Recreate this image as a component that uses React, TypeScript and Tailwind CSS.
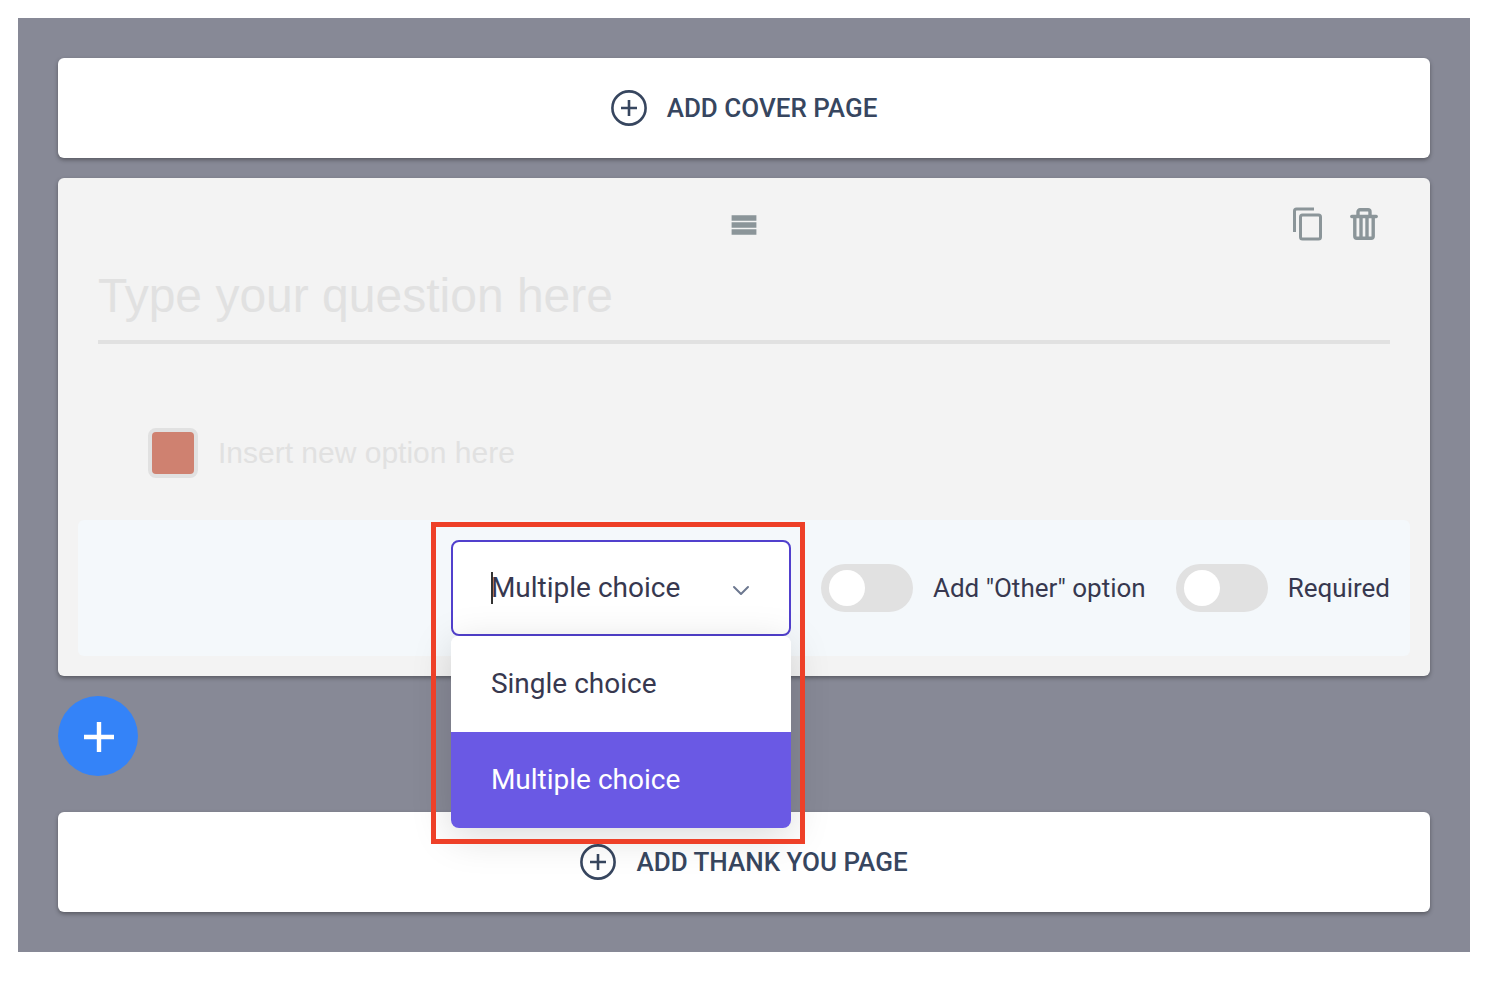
import React, { useState } from "react";

interface IconProps {
  className?: string;
}

const CHOICES = ["Single choice", "Multiple choice"];

function PlusCircleIcon({ className }: IconProps) {
  return (
    <svg className={className} viewBox="0 0 36 36" fill="none" stroke="currentColor" strokeWidth="2.6" aria-hidden="true">
      <circle cx="18" cy="18" r="16.6" />
      <path d="M18 10v16M10 18h16" />
    </svg>
  );
}

function CopyIcon({ className }: IconProps) {
  return (
    <svg className={className} viewBox="0 0 36 36" fill="none" stroke="currentColor" strokeWidth="3" aria-hidden="true">
      <path d="M4.5 26V5a2 2 0 0 1 2-2H24" />
      <rect x="10.5" y="9" width="20" height="24" rx="2" />
    </svg>
  );
}

function TrashIcon({ className }: IconProps) {
  return (
    <svg className={className} viewBox="0 0 36 36" fill="none" stroke="currentColor" strokeWidth="3.4" aria-hidden="true">
      <path d="M12 10V5.8a2 2 0 0 1 2-2h8a2 2 0 0 1 2 2V10" />
      <path d="M5.800 10.500h24.400" strokeLinecap="round" />
      <path d="M8.800 11v19.300a2 2 0 0 0 2 2h14.400a2 2 0 0 0 2-2V11" />
      <path d="M15 11v21M21 11v21" />
    </svg>
  );
}

function AddPageButton({ label }: { label: string }) {
  return (
    <button
      type="button"
      className="flex w-full items-center justify-center gap-5 h-[100px] rounded-md bg-white text-[26px] leading-8 font-medium text-[#37465f] shadow-[0_2px_4px_rgba(0,0,0,0.35)]"
    >
      <PlusCircleIcon className="w-9 h-9" />
      {label}
    </button>
  );
}

interface ToggleProps {
  label: string;
  checked: boolean;
  onChange: (checked: boolean) => void;
}

function Toggle({ label, checked, onChange }: ToggleProps) {
  return (
    <label className="flex items-center gap-5 text-[26px] leading-8 text-[#37384f] whitespace-nowrap">
      <input
        type="checkbox"
        checked={checked}
        onChange={(e) => onChange(e.target.checked)}
        className="flex items-center appearance-none w-[92px] h-12 px-2 rounded-full bg-[#e1e1e1] checked:bg-[#6a59e4] before:block before:w-9 before:h-9 before:rounded-full before:bg-white checked:before:ml-auto"
      />
      {label}
    </label>
  );
}

function ChoiceSelect() {
  const [choice, setChoice] = useState("Multiple choice");
  const [open, setOpen] = useState(true);

  const pick = (value: string) => {
    setChoice(value);
    setOpen(false);
  };

  return (
    <div className="relative z-10 w-[340px] text-[28px] text-[#37384f]">
      <select
        aria-label="Question type"
        value={choice}
        onChange={(e) => pick(e.target.value)}
        className="block w-full h-24 pl-[38px] pr-20 appearance-none rounded-lg border-2 border-[#5140cd] bg-white outline-none"
      >
        {CHOICES.map((c) => (
          <option key={c}>{c}</option>
        ))}
      </select>
      <span className="absolute left-10 top-8 w-0.5 h-8 bg-[#333333]" />
      <svg
        className="absolute right-10 top-10 w-5 h-5 text-[#6d7890] pointer-events-none"
        viewBox="0 0 20 20"
        fill="none"
        stroke="currentColor"
        strokeWidth="2"
        strokeLinecap="round"
        strokeLinejoin="round"
        aria-hidden="true"
      >
        <path d="M3 7l7 7 7-7" />
      </svg>

      {open && (
        <ul
          role="listbox"
          aria-label="Question types"
          className="absolute left-0 top-full w-full overflow-hidden rounded-lg bg-white shadow-[0_8px_40px_rgba(0,0,0,0.15)]"
        >
          {CHOICES.map((c) => (
            <li key={c} role="option" aria-selected={c === choice}>
              <button
                type="button"
                onClick={() => pick(c)}
                className={`block w-full h-24 px-10 text-left ${c === choice ? "bg-[#6a59e4] text-white" : "bg-white"}`}
              >
                {c}
              </button>
            </li>
          ))}
        </ul>
      )}

      {/* highlight around the drop-down */}
      <div className="absolute -left-5 -top-[18px] w-[374px] h-[322px] border-5 border-[#ee4028] pointer-events-none" />
    </div>
  );
}

function QuestionCard() {
  const [question, setQuestion] = useState("");
  const [option, setOption] = useState("");
  const [other, setOther] = useState(false);
  const [required, setRequired] = useState(false);

  return (
    <section className="rounded-md bg-[#f3f3f3] pt-7 px-5 pb-5 shadow-[0_2px_4px_rgba(0,0,0,0.35)]">
      <div className="grid grid-cols-3 items-center px-7 text-[#8b9599]">
        <button type="button" aria-label="Move question" className="col-start-2 justify-self-center">
          <svg className="w-[26px] h-[22px]" viewBox="0 0 26 22" fill="currentColor" aria-hidden="true">
            <path d="M.6 2.300h24.800v5.400H.6zM.6 9.300h24.800v5.400H.6zM.6 16.300h24.800v5.400H.6z" />
          </svg>
        </button>
        <div className="flex justify-end gap-5">
          <button type="button" aria-label="Duplicate question">
            <CopyIcon className="w-9 h-9" />
          </button>
          <button type="button" aria-label="Delete question">
            <TrashIcon className="w-9 h-9" />
          </button>
        </div>
      </div>

      <div className="mt-6 px-5">
        <input
          type="text"
          aria-label="Question"
          placeholder="Type your question here"
          value={question}
          onChange={(e) => setQuestion(e.target.value)}
          className="block w-full h-[78px] pb-4 border-b-4 border-[#e1e1e1] font-['Liberation_Sans',sans-serif] text-[48px] leading-14 text-[#37384f] placeholder:text-[#e1e1e1] outline-none"
        />
      </div>

      <div className="flex items-center gap-5 mt-21 pl-[70px] pr-5">
        <button
          type="button"
          aria-label="Option color"
          className="w-[50px] h-[50px] shrink-0 rounded-lg border-4 border-[#e1e1e1] bg-[#e1e1e1]"
        >
          <span className="block w-full h-full rounded-sm bg-[#cf8170]" />
        </button>
        <input
          type="text"
          aria-label="New option"
          placeholder="Insert new option here"
          value={option}
          onChange={(e) => setOption(e.target.value)}
          className="flex-1 h-[50px] font-['Liberation_Sans',sans-serif] text-[30px] text-[#37384f] placeholder:text-[#e1e1e1] outline-none"
        />
      </div>

      <div className="flex items-center justify-end gap-[30px] mt-[42px] p-5 rounded-md bg-[#f4f8fb]">
        <ChoiceSelect />
        <Toggle label={'Add "Other" option'} checked={other} onChange={setOther} />
        <Toggle label="Required" checked={required} onChange={setRequired} />
      </div>
    </section>
  );
}

export default function App() {
  return (
    <div className="bg-white pt-[18px] pl-[18px] pr-7 pb-[30px] font-[Roboto,sans-serif]">
      <main className="bg-[#878996] p-10">
        <AddPageButton label="ADD COVER PAGE" />
        <div className="my-5">
          <QuestionCard />
        </div>
        <button
          type="button"
          aria-label="Add question"
          className="flex items-center justify-center w-20 h-20 mb-9 rounded-full bg-[#3483f8] text-white"
        >
          <svg className="w-8 h-8" viewBox="0 0 32 32" stroke="currentColor" strokeWidth="4.4" aria-hidden="true">
            <path d="M17 2v30M2 17h30" />
          </svg>
        </button>
        <AddPageButton label="ADD THANK YOU PAGE" />
      </main>
    </div>
  );
}
